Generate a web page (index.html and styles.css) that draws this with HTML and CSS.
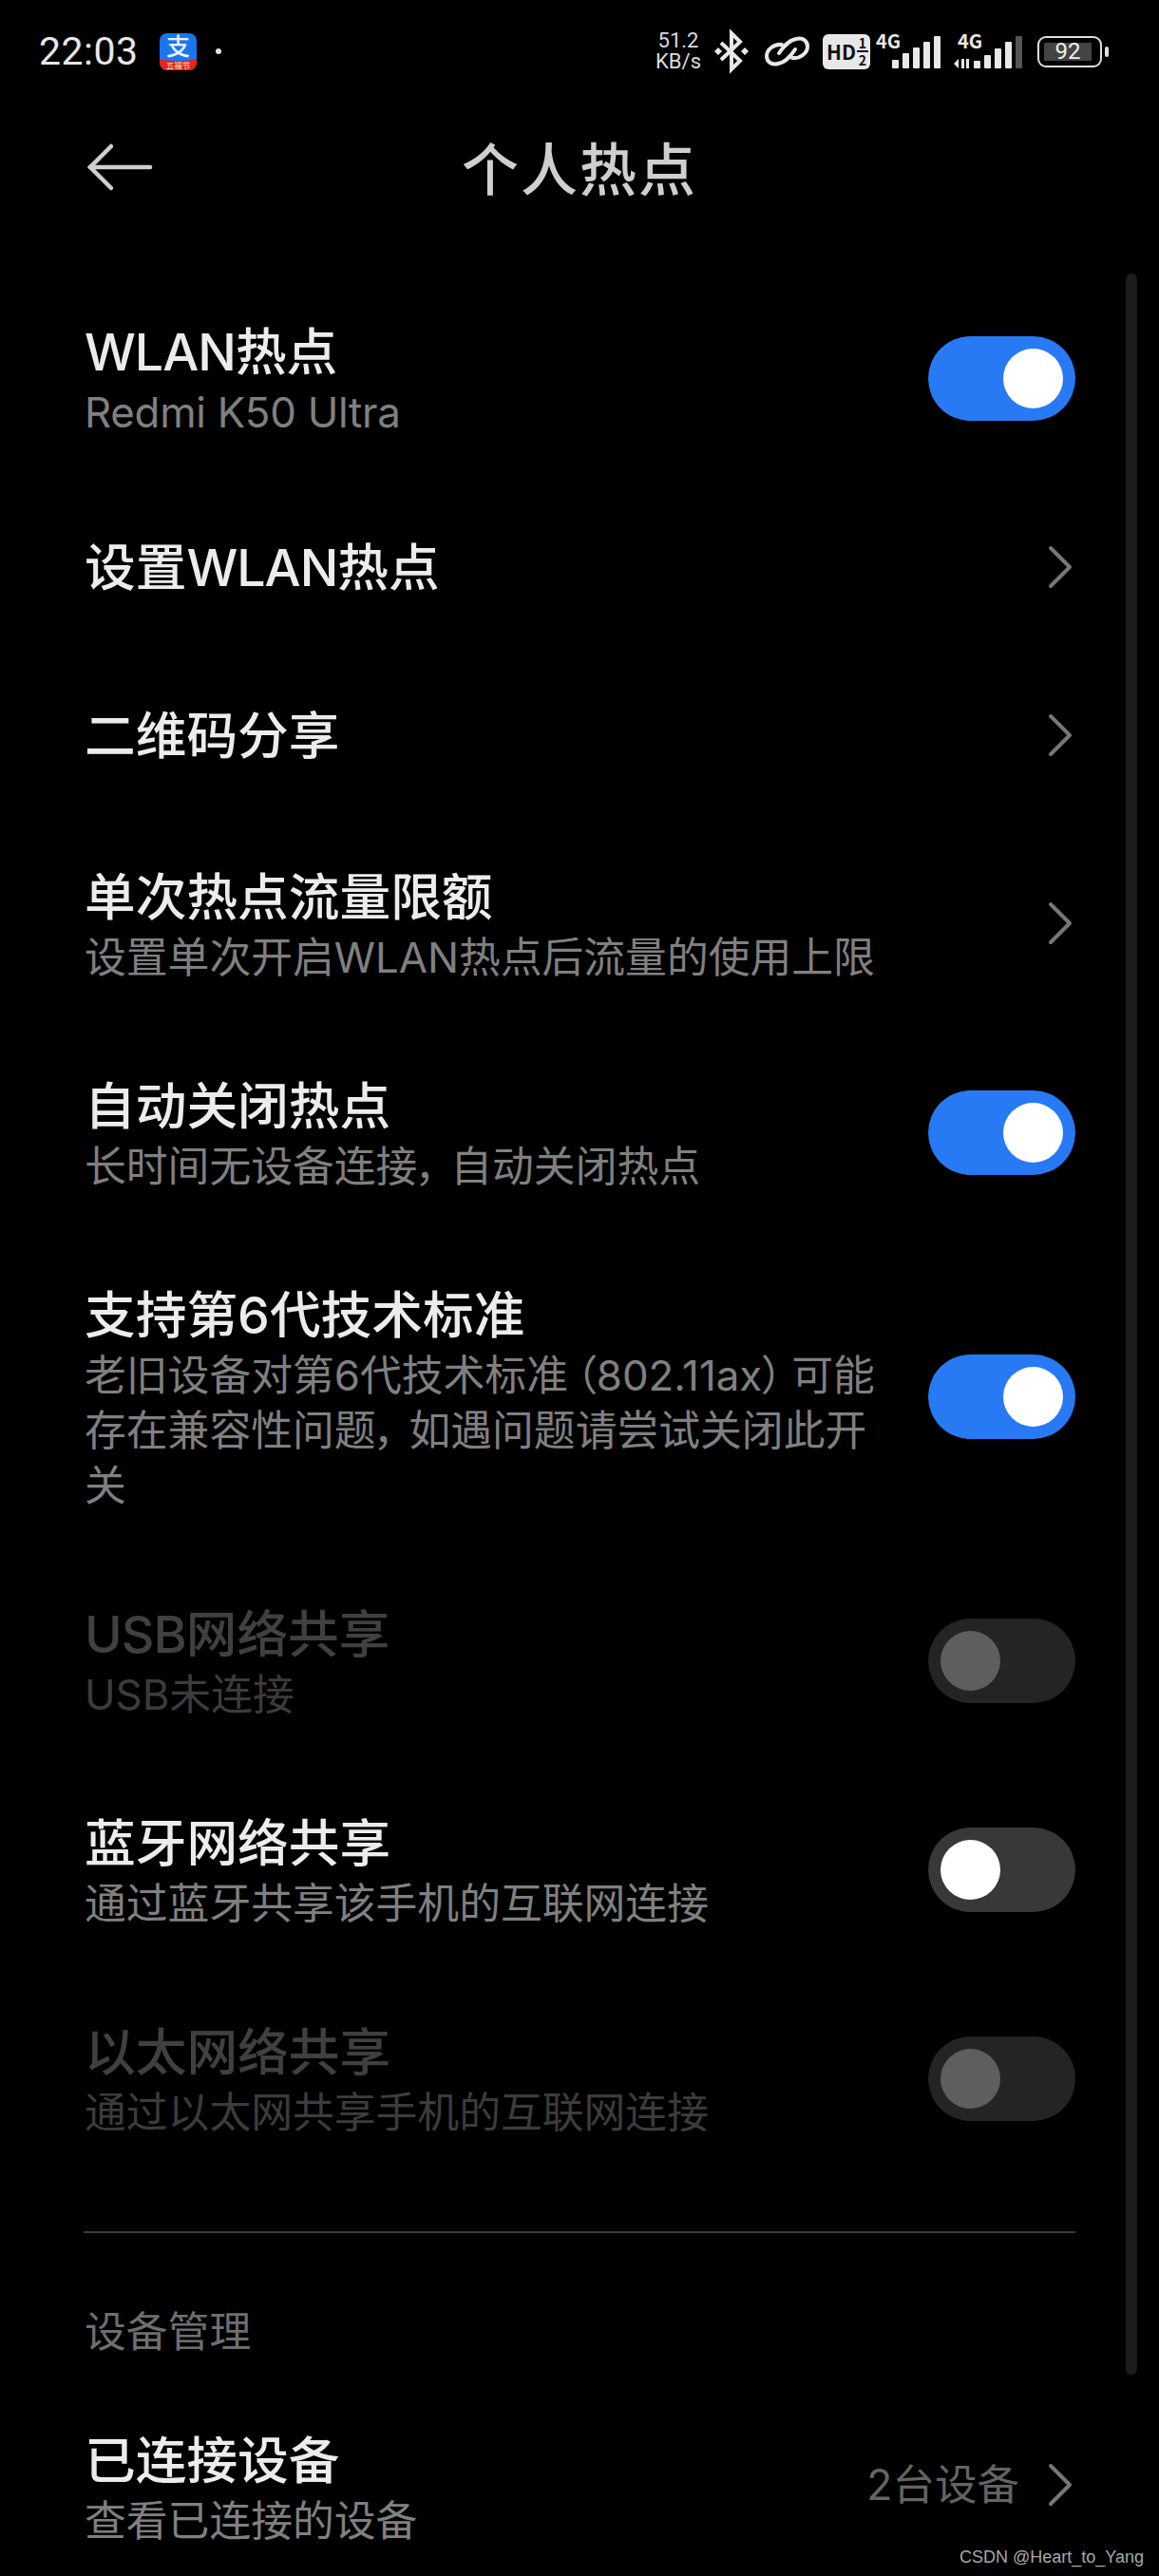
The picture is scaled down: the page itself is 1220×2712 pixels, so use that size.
FILE: index.html
```html
<!DOCTYPE html>
<html lang="zh-CN">
<head>
    <meta charset="UTF-8">
    <meta name="viewport" content="width=device-width, initial-scale=1.0">
    <title>个人热点</title>
    <link rel="stylesheet" href="styles.css">
</head>
<body>
    <div class="phone">
        <div class="status-bar">
            <div class="status-left">
                <span class="clock">22:03</span>
                <svg class="app-icon" viewBox="0 0 39 39">
                    <rect width="39" height="39" rx="8" fill="#1a76ee"/>
                    <path d="M0 27c12 3 27 3 39 0v4a8 8 0 0 1-8 8H8a8 8 0 0 1-8-8z" fill="#e8221c"/>
                    <text x="19.5" y="23" font-size="25" font-weight="500" text-anchor="middle" fill="#e8f2ff">支</text>
                    <text x="19.5" y="37" font-size="8.5" text-anchor="middle" fill="#ffe9c0">五福节</text>
                </svg>
                <span class="dot"></span>
            </div>
            <div class="status-right">
                <div class="speed"><span>51.2</span><span>KB/s</span></div>
                <svg class="icon-bt" viewBox="0 0 38 42" fill="none" stroke="#e8e8e8" stroke-width="4">
                    <path d="M8 12l20 19-9 9V2l9 9L8 30"/>
                    <path d="M1 21l4-4 4 4-4 4z" fill="#e8e8e8" stroke="none"/>
                    <path d="M29 21l4-4 4 4-4 4z" fill="#e8e8e8" stroke="none"/>
                </svg>
                <svg class="icon-link" viewBox="0 0 47 34" fill="none" stroke="#e8e8e8" stroke-width="4" stroke-linecap="round">
                    <path d="M15 19C19 13 24 6 33 4c8-2 12 3 12 8 0 7-8 13-16 12"/>
                    <path d="M32 15C28 21 23 28 14 30c-8 2-12-3-12-8 0-7 8-13 16-12"/>
                </svg>
                <svg class="icon-hd" viewBox="0 0 50 37">
                    <rect width="50" height="37" rx="6" fill="#e8e8e8"/>
                    <text x="4" y="27" font-size="21" font-weight="700" fill="#111">HD</text>
                    <text x="42" y="15" font-size="14" font-weight="700" text-anchor="middle" fill="#111">1</text>
                    <path d="M36 18h12" stroke="#111" stroke-width="2"/>
                    <text x="42" y="33" font-size="14" font-weight="700" text-anchor="middle" fill="#111">2</text>
                </svg>
                <svg class="icon-signal" viewBox="0 0 68 36" fill="#e8e8e8">
                    <text x="0" y="15" font-size="20" font-weight="700">4G</text>
                    <rect x="17" y="27" width="7" height="9" rx="1"/>
                    <rect x="28" y="20" width="7" height="16" rx="1"/>
                    <rect x="39" y="14" width="7" height="22" rx="1"/>
                    <rect x="50" y="8" width="7" height="28" rx="1"/>
                    <rect x="61" y="2" width="7" height="34" rx="1"/>
                </svg>
                <svg class="icon-signal-data" viewBox="0 0 72 36" fill="#e8e8e8">
                    <text x="4" y="15" font-size="20" font-weight="700">4G</text>
                    <path d="M0 31l5-5v10zM8 26h3v10H8zM13 26h3v10h-3z"/>
                    <rect x="21" y="28" width="7" height="8" rx="1"/>
                    <rect x="32" y="22" width="7" height="14" rx="1"/>
                    <rect x="43" y="15" width="7" height="21" rx="1"/>
                    <rect x="54" y="8" width="7" height="28" rx="1"/>
                    <rect x="65" y="2" width="7" height="34" rx="1" fill="#555"/>
                </svg>
                <div class="battery">
                    <div class="battery-body"><span class="battery-level">92</span></div>
                    <span class="battery-tip"></span>
                </div>
            </div>
        </div>

        <div class="header">
            <svg class="back" viewBox="0 0 68 48" fill="none" stroke="#cfcfcf" stroke-width="4.5" stroke-linecap="round">
                <path d="M66 24H3"/>
                <path d="M25 2L3 24l22 22"/>
            </svg>
            <h1 class="page-title">个人热点</h1>
        </div>

        <div class="scrollbar"></div>

        <ul class="settings">
            <li class="row">
                <div class="row-text">
                    <div class="row-title"><span class="latin">WLAN</span>热点</div>
                    <div class="row-sub"><span class="tight">Redmi K50 Ultra</span></div>
                </div>
                <span class="toggle on"></span>
            </li>
            <li class="row single">
                <div class="row-text">
                    <div class="row-title"><span>设置</span><span class="latin">WLAN</span>热点</div>
                </div>
                <svg class="chevron" viewBox="0 0 24 44"><path d="M2 2l20 20L2 42"/></svg>
            </li>
            <li class="row single">
                <div class="row-text">
                    <div class="row-title">二维码分享</div>
                </div>
                <svg class="chevron" viewBox="0 0 24 44"><path d="M2 2l20 20L2 42"/></svg>
            </li>
            <li class="row">
                <div class="row-text">
                    <div class="row-title">单次热点流量限额</div>
                    <div class="row-sub">设置单次开启WLAN热点后流量的使用上限</div>
                </div>
                <svg class="chevron" viewBox="0 0 24 44"><path d="M2 2l20 20L2 42"/></svg>
            </li>
            <li class="row">
                <div class="row-text">
                    <div class="row-title">自动关闭热点</div>
                    <div class="row-sub">长时间无设备连接<span class="comma">，</span>自动关闭热点</div>
                </div>
                <span class="toggle on"></span>
            </li>
            <li class="row">
                <div class="row-text">
                    <div class="row-title">支持第6代技术标准</div>
                    <div class="row-sub">老旧设备对第6代技术标准<span class="paren-open">（</span>802.11ax<span class="paren-close">）</span>可能<br>存在兼容性问题<span class="comma">，</span>如遇问题请尝试关闭此开<br>关</div>
                </div>
                <span class="toggle on"></span>
            </li>
            <li class="row disabled">
                <div class="row-text">
                    <div class="row-title"><span class="latin">USB</span>网络共享</div>
                    <div class="row-sub">USB未连接</div>
                </div>
                <span class="toggle"></span>
            </li>
            <li class="row">
                <div class="row-text">
                    <div class="row-title">蓝牙网络共享</div>
                    <div class="row-sub">通过蓝牙共享该手机的互联网连接</div>
                </div>
                <span class="toggle"></span>
            </li>
            <li class="row disabled">
                <div class="row-text">
                    <div class="row-title">以太网络共享</div>
                    <div class="row-sub">通过以太网共享手机的互联网连接</div>
                </div>
                <span class="toggle"></span>
            </li>
        </ul>

        <div class="divider"></div>
        <div class="section-label">设备管理</div>

        <div class="row">
            <div class="row-text">
                <div class="row-title">已连接设备</div>
                <div class="row-sub">查看已连接的设备</div>
            </div>
            <div class="row-value">
                <span>2台设备</span>
                <svg class="chevron" viewBox="0 0 24 44"><path d="M2 2l20 20L2 42"/></svg>
            </div>
        </div>

        <div class="watermark">CSDN @Heart_to_Yang</div>
    </div>
</body>
</html>
```

FILE: styles.css
```css
* {
    box-sizing: border-box;
}

html, body {
    margin: 0;
    height: 100%;
    background: #000;
}

body {
    font-family: 'Inter', 'Noto Sans CJK SC', sans-serif;
    font-feature-settings: "palt";
    overflow: hidden;
}

svg {
    overflow: visible;
}

svg text {
    font-family: 'Noto Sans CJK SC', 'Noto Sans', sans-serif;
}

.phone {
    position: relative;
    width: 1220px;
    height: 2712px;
    overflow: hidden;
    background: #000;
    color: #e8e8e8;
}

/* status bar */
.status-bar {
    display: flex;
    justify-content: space-between;
    align-items: center;
    height: 108px;
    padding: 0 53px 0 41px;
}

.status-left, .status-right {
    display: flex;
    align-items: center;
}

.clock {
    font-family: 'Roboto', sans-serif;
    font-size: 41px;
    letter-spacing: 0.5px;
    line-height: 1;
    color: #e8e8e8;
}

.app-icon {
    width: 39px;
    height: 39px;
    margin-left: 22px;
}

.dot {
    width: 6px;
    height: 6px;
    margin-left: 20px;
    border-radius: 50%;
    background: #e0e0e0;
}

.speed {
    display: flex;
    flex-direction: column;
    align-items: center;
    font-family: 'Roboto', sans-serif;
    font-size: 22px;
    line-height: 22px;
    color: #dcdcdc;
}

.icon-bt {
    width: 38px;
    height: 42px;
    margin-left: 13px;
}

.icon-link {
    width: 47px;
    height: 34px;
    margin-left: 16px;
}

.icon-hd {
    width: 50px;
    height: 37px;
    margin-left: 14px;
}

.icon-signal {
    width: 68px;
    height: 36px;
    margin-left: 6px;
}

.icon-signal-data {
    width: 72px;
    height: 36px;
    margin-left: 14px;
}

.battery {
    display: flex;
    align-items: center;
    margin-left: 16px;
}

.battery-body {
    display: flex;
    width: 68px;
    height: 33px;
    padding: 5px;
    border: 2px solid #e0e0e0;
    border-radius: 9px;
}

.battery-level {
    width: 50px;
    background: #444;
    font-family: 'Roboto', sans-serif;
    font-size: 24px;
    line-height: 19px;
    text-align: center;
    color: #f0f0f0;
}

.battery-tip {
    width: 4px;
    height: 11px;
    margin-left: 3px;
    border-radius: 2px;
    background: #e0e0e0;
}

/* title row */
.header {
    position: relative;
    display: flex;
    align-items: center;
    justify-content: center;
    height: 136px;
    margin-bottom: 44px;
}

.back {
    position: absolute;
    left: 92px;
    top: 44px;
    width: 68px;
    height: 48px;
}

.page-title {
    margin: 0 0 3px;
    font-size: 60px;
    font-weight: 500;
    letter-spacing: 2px;
    color: #cfcfcf;
}

.scrollbar {
    position: absolute;
    left: 1185px;
    top: 288px;
    width: 12px;
    height: 2212px;
    border-radius: 6px;
    background: #1c1c1c;
}

/* setting rows */
.settings {
    list-style-type: none;
    margin: 0;
    padding: 0;
}

.row {
    display: flex;
    justify-content: space-between;
    align-items: center;
    padding: 41px 88px 41px 89px;
}

.row-text {
    margin-bottom: 3px;
}

.row.single {
    height: 177px;
    padding-top: 0;
    padding-bottom: 0;
}

.row.single .row-text {
    margin-bottom: 0;
}

.row-title {
    padding-top: 9.5px;
    font-size: 53.7px;
    font-weight: 500;
    line-height: 64px;
    color: #ececec;
}

.row.single .row-title {
    padding-top: 3px;
}

.row-sub {
    margin-top: 3.5px;
    font-size: 43.8px;
    line-height: 58px;
    color: #808080;
}

.latin {
    letter-spacing: -1px;
}

.tight {
    letter-spacing: -0.25px;
}

.comma {
    margin-right: 13px;
}

.paren-open {
    margin-left: 8px;
}

.paren-close {
    margin-right: 9px;
}

.row.disabled .row-title {
    color: #404040;
}

.row.disabled .row-sub {
    color: #3c3c3c;
}

.row-value {
    display: flex;
    align-items: center;
    gap: 31px;
    margin-bottom: 4px;
    font-size: 44.5px;
    color: #646464;
}

.row-value span {
    margin-bottom: 7px;
}

.chevron {
    width: 24px;
    height: 44px;
    margin-right: 4px;
    fill: none;
    stroke: #777;
    stroke-width: 4px;
    stroke-linecap: round;
    stroke-linejoin: round;
}

/* switches */
.toggle {
    position: relative;
    flex: none;
    width: 155px;
    height: 89px;
    border-radius: 45px;
    background: #383838;
}

.toggle::after {
    content: '';
    position: absolute;
    left: 13px;
    top: 13px;
    width: 63px;
    height: 63px;
    border-radius: 50%;
    background: #fff;
}

.toggle.on {
    background: #277af4;
}

.toggle.on::after {
    left: 79px;
}

.row.disabled .toggle {
    background: #242424;
}

.row.disabled .toggle::after {
    background: #5e5e5e;
}

.divider {
    height: 2px;
    margin: 51px 88px 0;
    background: #3c3c3c;
}

.section-label {
    padding: 70px 89px 17px;
    font-size: 43.8px;
    line-height: 70px;
    color: #6e6e6e;
}

.watermark {
    position: absolute;
    right: 16px;
    bottom: 9px;
    font-family: 'Liberation Sans', Arial, sans-serif;
    font-size: 18px;
    color: #a8a8a8;
}
```
